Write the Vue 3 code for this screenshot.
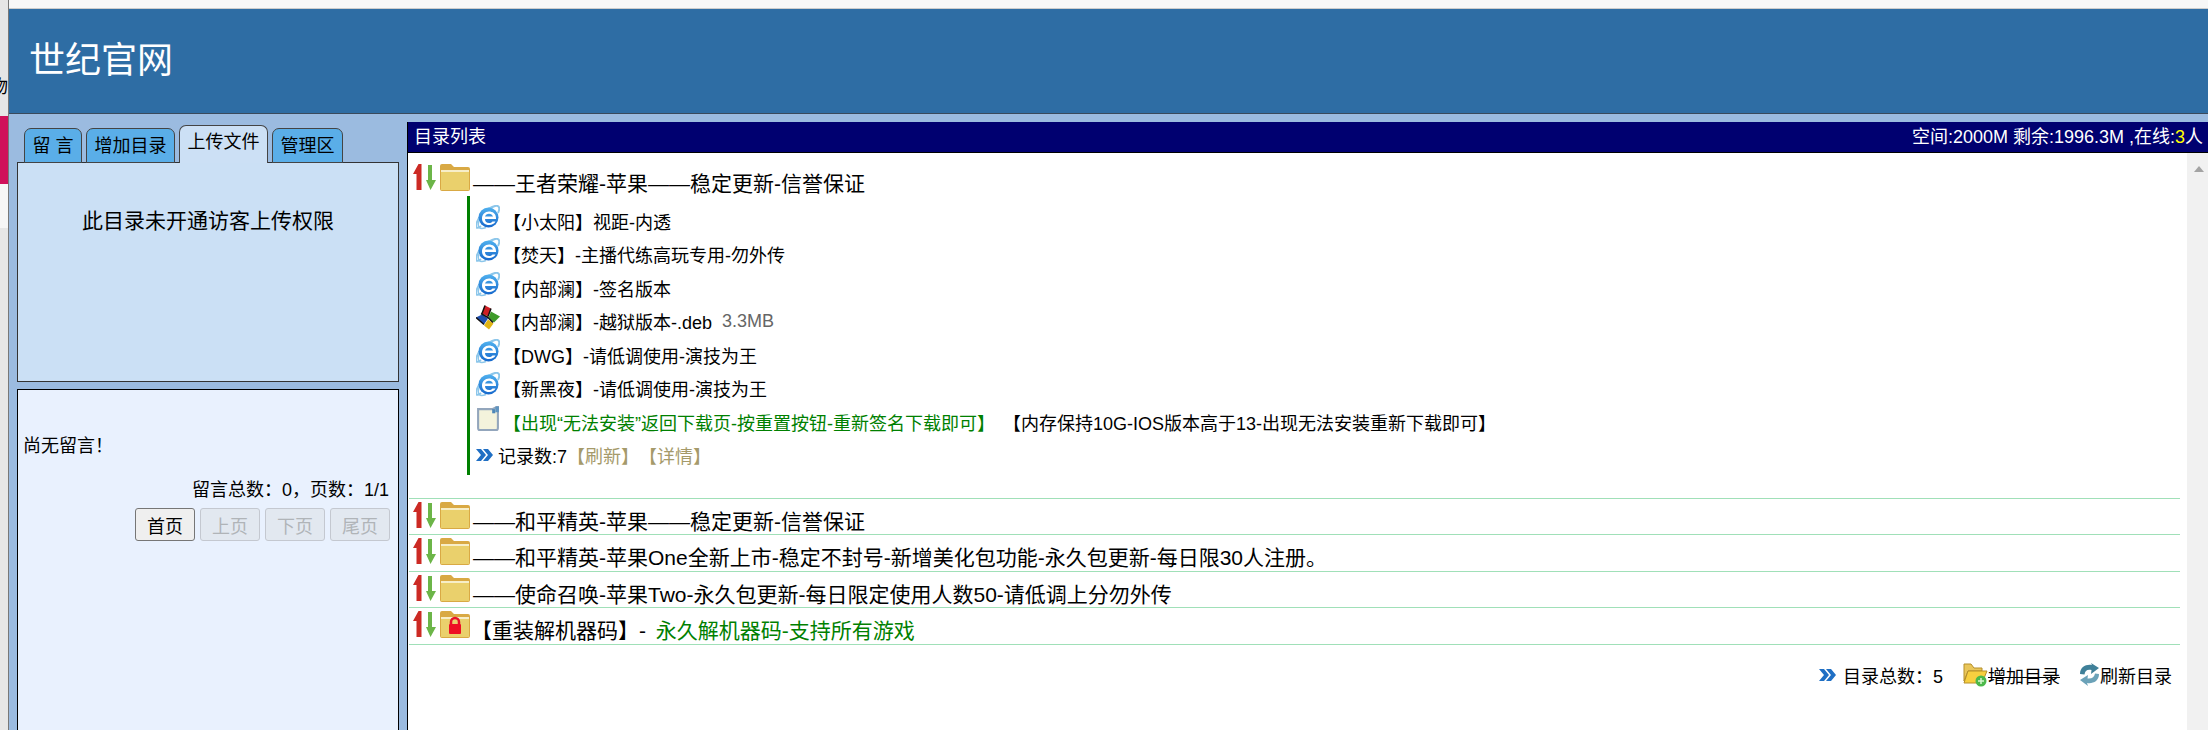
<script setup>
const items = [
  { icon: 'ie', text: '【小太阳】视距-内透' },
  { icon: 'ie', text: '【焚天】-主播代练高玩专用-勿外传' },
  { icon: 'ie', text: '【内部澜】-签名版本' },
  { icon: 'win', text: '【内部澜】-越狱版本-.deb', size: '3.3MB' },
  { icon: 'ie', text: '【DWG】-请低调使用-演技为王' },
  { icon: 'ie', text: '【新黑夜】-请低调使用-演技为王' }
]
const rows = [
  '——和平精英-苹果——稳定更新-信誉保证',
  '——和平精英-苹果One全新上市-稳定不封号-新增美化包功能-永久包更新-每日限30人注册。',
  '——使命召唤-苹果Two-永久包更新-每日限定使用人数50-请低调上分勿外传'
]
const tabs = [
  { label: '留 言', cls: 'w58' },
  { label: '增加目录', cls: 'w90' },
  { label: '上传文件', cls: 'w90 active' },
  { label: '管理区', cls: 'w72' }
]
const pages = [
  { label: '首页', disabled: false },
  { label: '上页', disabled: true },
  { label: '下页', disabled: true },
  { label: '尾页', disabled: true }
]
</script>

<template>
  <div class="page">
    <svg class="defs" width="0" height="0">
      <defs>
        <linearGradient id="ieg" x1="0" y1="0" x2="0" y2="1">
          <stop offset="0" stop-color="#4fb0ee" />
          <stop offset="1" stop-color="#1668cc" />
        </linearGradient>
        <symbol id="arrows" viewBox="0 0 23 27">
          <path d="M5.500 0 H8.500 V26 H3.500 V10 H0 Z" fill="#cc2a24" />
          <path d="M15 1 H19 V16 H23 L17.500 26 L13 16 H15 Z" fill="#6cb548" />
        </symbol>
        <symbol id="folder" viewBox="0 0 30 27">
          <path d="M0 2 Q0 0 2 0 H11 L14 3 H28 Q30 3 30 5 V25 Q30 27 28 27 H2 Q0 27 0 25 Z" fill="#d9a944" />
          <rect x="1" y="6" width="28" height="20" fill="#ead06c" />
          <rect x="1" y="6" width="28" height="2" fill="#f7eec8" />
        </symbol>
        <symbol id="lockfolder" viewBox="0 0 30 27">
          <path d="M0 2 Q0 0 2 0 H11 L14 3 H28 Q30 3 30 5 V25 Q30 27 28 27 H2 Q0 27 0 25 Z" fill="#d9a944" />
          <rect x="1" y="6" width="28" height="20" fill="#ead06c" />
          <rect x="1" y="6" width="28" height="2" fill="#f7eec8" />
          <path d="M11 13 V11 A4 4 0 0 1 19 11 V13" fill="none" stroke="#e8102a" stroke-width="2.500" />
          <rect x="9" y="13" width="12" height="10" rx="1" fill="#ee0f24" />
        </symbol>
        <symbol id="ie" viewBox="0 0 24 25">
          <path d="M5 21 C0 25 -1 22 1 17 C3 11 11 3 19 1 C24 0 24 4 22 8" fill="none" stroke="#8cc6ea" stroke-width="2" />
          <circle cx="12.500" cy="12.500" r="10" fill="url(#ieg)" />
          <path d="M7 14 H20 V13 C20 8.500 16.500 6.500 13 6.500 C9 6.500 6 9.500 6 13.500 C6 17.500 9 20 13 20 C16 20 18.500 18.500 19.500 16.500 H16.500 C15.500 17.500 14.500 18 13.300 18 C10.500 18 9 16.500 9 14 Z M9 11.500 C9.500 9.800 11 8.700 13 8.700 C15 8.700 16.500 9.800 17 11.500 Z" fill="#fff" />
          <path d="M3 16 C1 22 3 25 10 22.500" fill="none" stroke="#8cc6ea" stroke-width="1.500" />
        </symbol>
        <symbol id="win" viewBox="0 0 24 24">
          <path d="M9 0 L15 3 L12 11 L6 8 Z" fill="#cf1f25" />
          <path d="M15 6 L24 11 L18 17 L12.500 12 Z" fill="#3f9a2a" />
          <path d="M6 9 L12 13 L8 19 L0 12 Z" fill="#1e4fb0" />
          <path d="M12 14 L17.500 18 L13 24 L8 20 Z" fill="#e0b414" />
          <path d="M0 12 L8 19 M5 8 L12 12 L17 17 M9 0 L6 8 M15 3 L12 11" fill="none" stroke="#111" stroke-width="1.500" />
        </symbol>
        <symbol id="note" viewBox="0 0 22 24">
          <path d="M1.500 3 H15 L20.500 0.500 V21 Q20.500 23 19 23 H3 Q1.500 23 1.500 21 Z" fill="#f4f3dc" stroke="#93a6bc" stroke-width="2" />
          <path d="M15 3 H18 V7 H15 Z" fill="#4d87b8" />
          <path d="M18 0.500 L21.500 0.500 V6 H18 Z" fill="#5f94c0" />
        </symbol>
        <symbol id="chev" viewBox="0 0 17 12">
          <path d="M0 0 H5 L10 6 L5 12 H0 L5 6 Z M7 0 H12 L17 6 L12 12 H7 L12 6 Z" fill="#1f6fc4" />
        </symbol>
        <symbol id="addfolder" viewBox="0 0 25 25">
          <path d="M1 2 H8 L11 6 H19 V9 H5 L1 19 Z" fill="#e9c65a" stroke="#b58f2a" />
          <path d="M5 9 H24 L19 21 H1 Z" fill="#f7cf3f" stroke="#b58f2a" />
          <circle cx="18" cy="19" r="5.500" fill="#4cb84a" />
          <path d="M18 16 V22 M15 19 H21" stroke="#d6f5cf" stroke-width="1.500" />
        </symbol>
        <symbol id="refresh" viewBox="0 0 21 23">
          <path d="M1 11 C1 4 7 1 13 2 L12 0 L20 5 L12 11 L12.500 7 C8 6 6 8 5.500 11.500 Z" fill="#3f8099" />
          <path d="M20 11 C20 18 14 21 8 20 L9 23 L1 17 L9 12 L8.500 15.500 C13 16 15.500 14 16 10.500 Z" fill="#6ba2b8" />
        </symbol>
      </defs>
    </svg>

    <aside class="strip">
      <div class="strip-top"></div>
      <div class="strip-text">物</div>
      <div class="strip-pink"></div>
      <div class="strip-white"></div>
    </aside>

    <div class="main">
      <div class="topband"></div>
      <header class="header">世纪官网</header>
      <div class="body">
        <div class="left">
          <div class="tabs">
            <div v-for="t in tabs" :key="t.label" class="tab" :class="t.cls">{{ t.label }}</div>
          </div>
          <div class="upload">此目录未开通访客上传权限</div>
          <div class="messages">
            <p class="none">尚无留言！</p>
            <p class="count">留言总数：0，页数：1/1</p>
            <div class="pager">
              <button v-for="p in pages" :key="p.label" :disabled="p.disabled">{{ p.label }}</button>
            </div>
          </div>
        </div>

        <div class="right">
          <div class="navbar">
            <span>目录列表</span>
            <span>空间:2000M 剩余:1996.3M ,在线:<b>3</b>人</span>
          </div>
          <div class="contentwrap">
            <div class="content">
              <div class="section">
                <div class="row open">
                  <svg class="arrows"><use href="#arrows" /></svg>
                  <svg class="folder"><use href="#folder" /></svg>
                  <span class="title">——王者荣耀-苹果——稳定更新-信誉保证</span>
                </div>
                <div class="tree">
                  <div v-for="it in items" :key="it.text" class="item">
                    <svg class="ficon"><use :href="'#' + it.icon" /></svg>
                    <span>{{ it.text }}</span>
                    <span v-if="it.size" class="size">{{ it.size }}</span>
                  </div>
                  <div class="item">
                    <svg class="ficon note"><use href="#note" /></svg>
                    <span class="green">【出现“无法安装”返回下载页-按重置按钮-重新签名下载即可】</span>
                    <span class="notice">【内存保持10G-IOS版本高于13-出现无法安装重新下载即可】</span>
                  </div>
                  <div class="item stat">
                    <svg class="chev"><use href="#chev" /></svg>
                    <span>记录数:7</span>
                    <span class="tan">【刷新】</span>
                    <span class="tan">【详情】</span>
                  </div>
                </div>
              </div>
              <div v-for="r in rows" :key="r" class="row line">
                <svg class="arrows"><use href="#arrows" /></svg>
                <svg class="folder"><use href="#folder" /></svg>
                <span class="title">{{ r }}</span>
              </div>
              <div class="row line">
                <svg class="arrows"><use href="#arrows" /></svg>
                <svg class="folder"><use href="#lockfolder" /></svg>
                <span class="title lock">【重装解机器码】- <span class="green gap">永久解机器码-支持所有游戏</span></span>
              </div>
              <div class="foot">
                <svg class="chev"><use href="#chev" /></svg>
                <span class="total">目录总数：5</span>
                <svg class="addf"><use href="#addfolder" /></svg>
                <span class="strike">增加目录</span>
                <svg class="ref"><use href="#refresh" /></svg>
                <span>刷新目录</span>
              </div>
            </div>
            <div class="scrollbar"><i></i></div>
          </div>
        </div>
      </div>
    </div>
  </div>
</template>

<style>
html, body { margin: 0; padding: 0; overflow: hidden; }
</style>

<style scoped>
.page {
  width: 2208px;
  height: 730px;
  display: flex;
  overflow: hidden;
  font-family: "Liberation Sans", "Noto Sans CJK SC", sans-serif;
  font-size: 18px;
  color: #000;
  background: #fff;
}
.defs { position: absolute; }
.strip {
  width: 8px;
  flex: none;
  display: flex;
  flex-direction: column;
  background: #e6e6e6;
  border-right: 1px solid #777;
  overflow: hidden;
}
.strip-top { height: 77px; }
.strip-text { height: 39px; line-height: 20px; font-size: 18px; width: 8px; direction: rtl; white-space: nowrap; }
.strip-pink { height: 68px; background: #d0105a; }
.strip-white { height: 44px; background: #f6f6f6; }
.main { flex: 1; min-width: 0; display: flex; flex-direction: column; }
.topband { height: 8px; background: #f7f7f7; border-bottom: 1px solid #ccc; }
.header {
  height: 105px;
  box-sizing: border-box;
  background: #2e6da4;
  border-bottom: 1px solid #3a4a5c;
  color: #fff;
  font-size: 36px;
  line-height: 103px;
  padding-left: 20px;
}
.body { flex: 1; min-height: 0; display: flex; background: #9bbbe0; }
.left { width: 382px; margin: 0 8px 0 8px; flex: none; display: flex; flex-direction: column; }
.tabs { display: flex; gap: 4px; padding: 11px 0 0 7px; height: 38px; align-items: flex-end; box-sizing: content-box; position: relative; z-index: 1; margin-bottom: -1px; }
.tab {
  height: 35px;
  box-sizing: border-box;
  background: #5aaee8;
  border: 1px solid #444;
  border-radius: 7px 7px 1px 1px;
  text-align: center;
  line-height: 34px;
  white-space: nowrap;
}
.tab.active { height: 38px; background: #cce0f5; border-bottom: none; line-height: 33px; border-radius: 7px 7px 0 0; }
.w58 { width: 58px; }
.w90 { width: 89px; }
.w72 { width: 71px; }
.upload {
  height: 220px;
  box-sizing: border-box;
  background: #cbe0f5;
  border: 1px solid #333;
  text-align: center;
  padding-top: 46px;
  line-height: 24px;
  font-size: 21px;
}
.messages {
  margin-top: 7px;
  flex: 1;
  box-sizing: border-box;
  background: #e9f1fe;
  border: 1px solid #000;
  border-bottom: none;
  padding: 0 5px;
}
.none { margin: 45px 0 0; line-height: 22px; }
.count { margin: 22px 4px 0 0; line-height: 22px; text-align: right; }
.pager { display: flex; justify-content: flex-end; gap: 5px; margin-top: 7px; padding-right: 3px; }
button {
  width: 60px;
  height: 33px;
  padding: 0;
  font: inherit;
  color: #000;
  background: #efefef;
  border: 1px solid #767676;
  border-radius: 3px;
}
button:disabled { color: #b0b4b8; background: #e2e8f0; border-color: #c4c8d0; }
.right { flex: 1; min-width: 0; display: flex; flex-direction: column; margin-top: 8px; border-left: 1px solid #000; }
.navbar {
  height: 31px;
  flex: none;
  box-sizing: border-box;
  background: #000070;
  border-bottom: 1px solid #000;
  color: #fff;
  display: flex;
  justify-content: space-between;
  padding: 0 5px 0 6px;
  line-height: 30px;
}
.navbar b { font-weight: normal; color: #ff0; }
.contentwrap { flex: 1; min-height: 0; display: flex; background: #fff; }
.content { flex: 1; min-width: 0; padding: 0 7px 0 1px; overflow: hidden; }
.scrollbar { width: 21px; flex: none; background: #f1f1f1; position: relative; }
.scrollbar i {
  position: absolute; left: 7px; top: 13px; width: 0; height: 0;
  border-left: 5px solid transparent; border-right: 5px solid transparent; border-bottom: 6px solid #a3a3a3;
}
.section { height: 345.5px; box-sizing: border-box; border-bottom: 1px solid #a0e0b8; }
.row { display: flex; align-items: flex-start; white-space: nowrap; font-size: 21px; }
.row.open { padding-top: 11px; height: 43px; box-sizing: border-box; }
.row.line { height: 36.5px; box-sizing: border-box; padding-top: 3px; border-bottom: 1px solid #a0e0b8; }
.arrows { width: 23px; height: 27px; margin-left: 4px; flex: none; }
.folder { width: 30px; height: 27px; margin-left: 4px; flex: none; }
.title { margin-left: 3px; line-height: 24px; margin-top: 8px; }
.title.lock { margin-left: 1px; }
.gap { margin-left: 4px; }
.tree { margin-left: 58px; border-left: 3px solid #008000; height: 279px; box-sizing: border-box; padding-top: 8px; }
.item { height: 33.5px; display: flex; align-items: center; white-space: nowrap; padding-left: 6px; }
.ficon { width: 24px; height: 25px; flex: none; margin: -7px 3px 0 0; }
.size { margin-left: 10px; color: #666; }
.green { color: #008000; }
.notice { margin-left: 8px; }
.tan { color: #a59a6a; }
.stat .chev { margin-right: 5px; }
.chev { width: 17px; height: 12px; flex: none; }
.foot { display: flex; align-items: center; justify-content: flex-end; margin-top: 17px; padding-right: 8px; white-space: nowrap; }
.total { margin: 0 20px 0 7px; }
.addf { width: 25px; height: 25px; flex: none; }
.strike { text-decoration: line-through; margin-right: 19px; }
.ref { width: 21px; height: 23px; flex: none; }
</style>
